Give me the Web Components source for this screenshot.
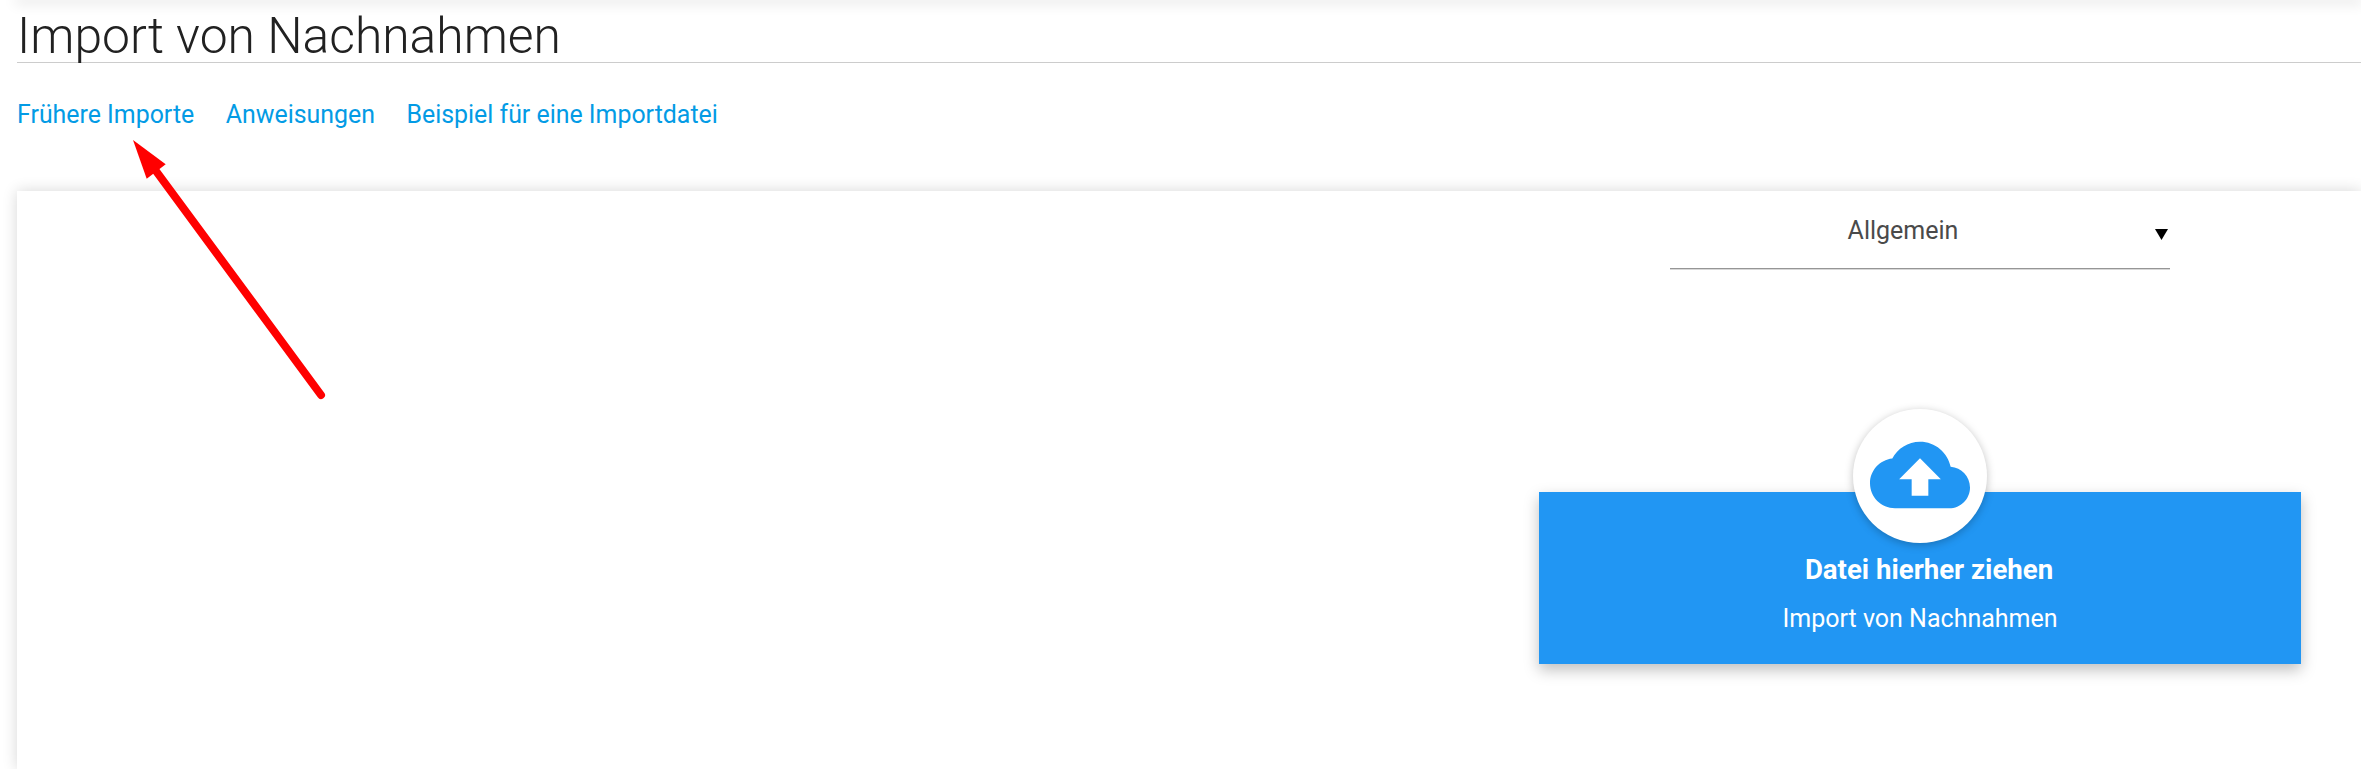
<!DOCTYPE html>
<html lang="de"><head><meta charset="utf-8"><title>Import von Nachnahmen</title>
<style>
html,body{margin:0;padding:0;height:100%;overflow:hidden;background:#fff;font-family:Roboto,"Liberation Sans",sans-serif}
</style></head><body>
<import-page>
<top-edge slot="heading"></top-edge>
<page-heading slot="heading">Import von Nachnahmen</page-heading>
<link-bar slot="links"><a href="#">Frühere Importe</a><a href="#">Anweisungen</a><a href="#">Beispiel für eine Importdatei</a></link-bar>
<import-card slot="card">
<select-field>Allgemein</select-field>
<drop-zone title-text="Datei hierher ziehen">Import von Nachnahmen</drop-zone>
</import-card>
<red-arrow slot="overlay"></red-arrow>
</import-page>
<script>
function def(name,css,html){customElements.define(name,class extends HTMLElement{constructor(){super();const r=this.attachShadow({mode:'open'});r.innerHTML='<style>'+css+'</style>'+html;}
connectedCallback(){const t=this.shadowRoot.querySelector('[data-title]');if(t)t.textContent=this.getAttribute('title-text')||'';}});}
def('import-page',`:host{display:block;position:relative;height:769px;overflow:hidden}
.wrap{display:flex;flex-direction:column;padding-left:17px;height:100%;box-sizing:border-box}`,
`<div class="wrap"><slot name="heading"></slot><slot name="links"></slot><slot name="card"></slot></div><slot name="overlay"></slot>`);
def('top-edge',`:host{display:block;height:0;box-shadow:0 0 14px 2px rgba(0,0,0,.2)}`,``);
def('page-heading',`:host{display:block;height:62px;border-bottom:1px solid #ccc;color:#212121}
h1{margin:0;font:300 49.8px/72px Roboto,sans-serif;white-space:nowrap}`,`<h1><slot></slot></h1>`);
def('link-bar',`:host{display:flex;gap:31.5px;height:128px;padding-top:36px;box-sizing:border-box;font:400 24.9px/32px Roboto,sans-serif}
::slotted(a){color:#039be5;text-decoration:none}`,`<slot></slot>`);
def('import-card',`:host{display:block;flex:1;position:relative;background:#fff;box-shadow:0 0 14px rgba(0,0,0,.16)}
.col{display:flex;flex-direction:column;align-items:center;width:762px;margin-left:1522px}`,
`<div class="col"><slot></slot></div>`);
def('select-field',`:host{display:flex;width:500px;height:78px;box-sizing:border-box;border-bottom:1px solid #969696;box-shadow:0 1px 0 #d8d8d8;color:#4a4a4a;font:400 25px/32px Roboto,sans-serif;position:relative;justify-content:center;padding:24px 34px 0 0}
.a{position:absolute;right:2px;top:38px;width:13px;height:11px}`,
`<span><slot></slot></span><svg class="a" viewBox="0 0 13 11"><path d="M0 0h13L6.5 11z" fill="#000"/></svg>`);
def('drop-zone',`:host{display:block;width:762px;height:172px;margin-top:223px;background:#2196f3;color:#fff;text-align:center;position:relative;box-shadow:0 6px 14px rgba(0,0,0,.25)}
.c{position:absolute;left:314px;top:-83px;width:134px;height:134px;border-radius:50%;background:#fff;box-shadow:0 2px 8px rgba(0,0,0,.25);display:flex;align-items:center;justify-content:center}
.c svg{width:100px;height:100px;margin-top:-2px}
.t{font:700 27.6px/36px Roboto,sans-serif;padding:60px 0 0 18px}
.s{font:400 25px/32px Roboto,sans-serif;margin-top:15px}`,
`<div class="c"><svg viewBox="0 0 24 24"><path fill="#2196f3" d="M19.35 10.04C18.67 6.59 15.64 4 12 4 9.11 4 6.6 5.64 5.35 8.04 2.34 8.36 0 10.91 0 14c0 3.31 2.69 6 6 6h13c2.76 0 5-2.24 5-5 0-2.64-2.05-4.78-4.65-4.96zM14 13v4h-4v-4H7l5-5 5 5h-3z"/></svg></div><div class="t" data-title></div><div class="s"><slot></slot></div>`);
def('red-arrow',`:host{position:absolute;left:0;top:0;width:400px;height:420px;pointer-events:none}svg{display:block}`,
`<svg width="400" height="420" viewBox="0 0 400 420"><path d="M156 171L321 395" stroke="#f00" stroke-width="8" stroke-linecap="round" fill="none"/><path d="M133 140L165.7 164.3L146.7 178.7z" fill="#f00"/></svg>`);
</script>
</body></html>
